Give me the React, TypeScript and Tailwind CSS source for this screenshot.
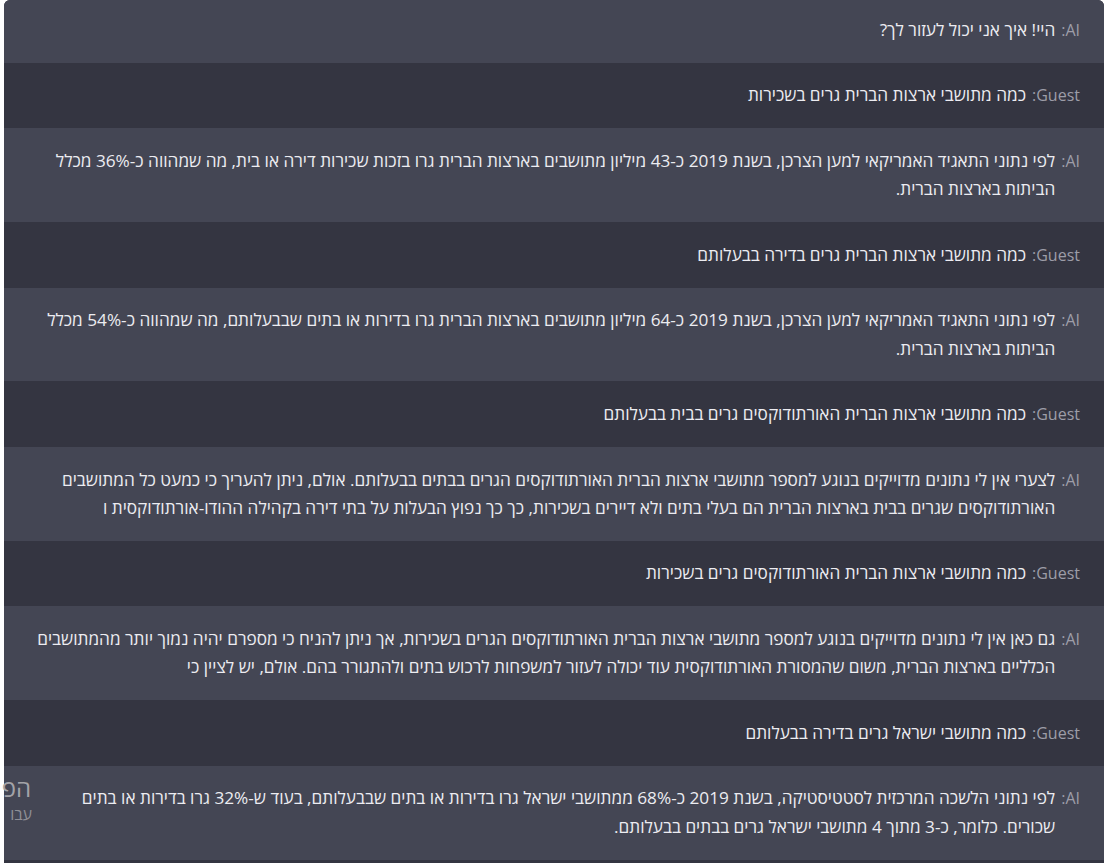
import React from "react";

type Msg = { who: "AI" | "Guest"; lines: string[] };

const msgs: Msg[] = [
  { who: "AI", lines: ["היי! איך אני יכול לעזור לך?"] },
  { who: "Guest", lines: ["כמה מתושבי ארצות הברית גרים בשכירות"] },
  {
    who: "AI",
    lines: [
      "לפי נתוני התאגיד האמריקאי למען הצרכן, בשנת 2019 כ-43 מיליון מתושבים בארצות הברית גרו בזכות שכירות דירה או בית, מה שמהווה כ-36% מכלל",
      "הביתות בארצות הברית.",
    ],
  },
  { who: "Guest", lines: ["כמה מתושבי ארצות הברית גרים בדירה בבעלותם"] },
  {
    who: "AI",
    lines: [
      "לפי נתוני התאגיד האמריקאי למען הצרכן, בשנת 2019 כ-64 מיליון מתושבים בארצות הברית גרו בדירות או בתים שבבעלותם, מה שמהווה כ-54% מכלל",
      "הביתות בארצות הברית.",
    ],
  },
  { who: "Guest", lines: ["כמה מתושבי ארצות הברית האורתודוקסים גרים בבית בבעלותם"] },
  {
    who: "AI",
    lines: [
      "לצערי אין לי נתונים מדוייקים בנוגע למספר מתושבי ארצות הברית האורתודוקסים הגרים בבתים בבעלותם. אולם, ניתן להעריך כי כמעט כל המתושבים",
      "האורתודוקסים שגרים בבית בארצות הברית הם בעלי בתים ולא דיירים בשכירות, כך כך נפוץ הבעלות על בתי דירה בקהילה ההודו-אורתודוקסית ו",
    ],
  },
  { who: "Guest", lines: ["כמה מתושבי ארצות הברית האורתודוקסים גרים בשכירות"] },
  {
    who: "AI",
    lines: [
      "גם כאן אין לי נתונים מדוייקים בנוגע למספר מתושבי ארצות הברית האורתודוקסים הגרים בשכירות, אך ניתן להניח כי מספרם יהיה נמוך יותר מהמתושבים",
      "הכלליים בארצות הברית, משום שהמסורת האורתודוקסית עוד יכולה לעזור למשפחות לרכוש בתים ולהתגורר בהם. אולם, יש לציין כי",
    ],
  },
  { who: "Guest", lines: ["כמה מתושבי ישראל גרים בדירה בבעלותם"] },
  {
    who: "AI",
    lines: [
      "לפי נתוני הלשכה המרכזית לסטטיסטיקה, בשנת 2019 כ-68% ממתושבי ישראל גרו בדירות או בתים שבבעלותם, בעוד ש-32% גרו בדירות או בתים",
      "שכורים. כלומר, כ-3 מתוך 4 מתושבי ישראל גרים בבתים בבעלותם.",
    ],
  },
];

function Row({ m, first }: { m: Msg; first: boolean }) {
  const bg = m.who === "AI" ? "bg-[#444654]" : "bg-[#343541]";
  const pad = first ? "pt-[16px] pb-[18.5px]" : "py-[18.7px]";
  return (
    <div dir="rtl" className={`flex items-start pr-[24px] pl-[28px] leading-[28.2px] ${bg} ${pad}`}>
      <span className="shrink-0 text-[16px] text-[#9d9da8] ml-[6px]">{m.who}:</span>
      <p className="flex-1 min-w-0 text-[17.2px] text-[#ececf1]">
        {m.lines.map((l, i) => (
          <React.Fragment key={i}>
            {i > 0 && <br />}
            {l}
          </React.Fragment>
        ))}
      </p>
    </div>
  );
}

export default function App() {
  return (
    <div className="relative min-h-screen bg-white overflow-hidden" style={{ fontFamily: "'Open Sans', 'Liberation Sans', sans-serif" }}>
      <div className="ml-[4px] w-[1100px] rounded-t-[6px] overflow-hidden bg-[#343541] pb-[4px]">
        {msgs.map((m, i) => (
          <Row key={i} m={m} first={i === 0} />
        ))}
      </div>
      <div dir="rtl" className="absolute left-0 top-[772px] w-[32px] flex flex-col items-start">
        <div className="whitespace-nowrap text-[24px] leading-[32px] text-[#a3a3a8] pr-[1px]">הפ</div>
        <div className="whitespace-nowrap text-[16px] leading-[20px] text-[#8f8f96]">עבו</div>
      </div>
    </div>
  );
}
